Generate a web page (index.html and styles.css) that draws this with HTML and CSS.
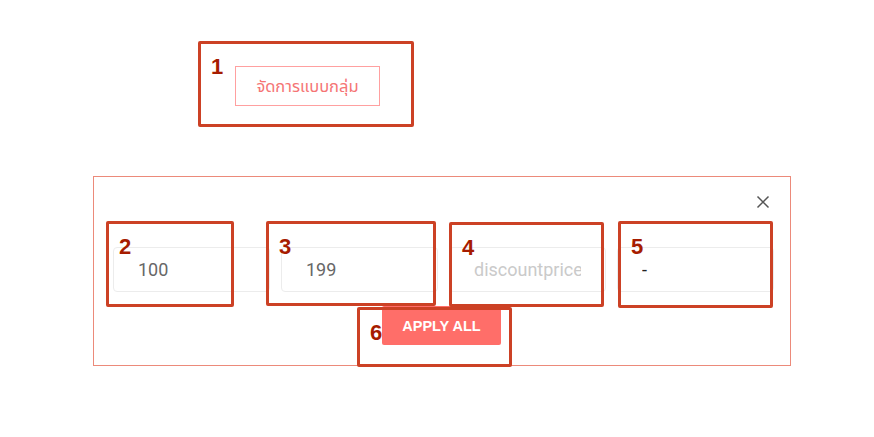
FILE: index.html
```html
<!DOCTYPE html>
<html lang="th">
<head>
    <meta charset="UTF-8">
    <meta name="viewport" content="width=device-width, initial-scale=1.0">
    <title>Bulk Edit</title>
    <link rel="stylesheet" href="styles.css">
</head>
<body>
    <div class="toolbar">
        <button class="bulk-btn" type="button">จัดการแบบกลุ่ม</button>
    </div>

    <div class="panel">
        <div class="panel-head">
            <button class="close-btn" type="button" aria-label="close">
                <svg width="14" height="14" viewBox="0 0 14 14">
                    <path d="M1.5 1.5 L12.5 12.5 M12.5 1.5 L1.5 12.5" stroke="#555" stroke-width="1.5" fill="none"/>
                </svg>
            </button>
        </div>
        <div class="fields">
            <input class="field" type="text" value="100">
            <input class="field" type="text" value="199">
            <input class="field" type="text" placeholder="discountprice">
            <input class="field field-dark" type="text" value="-">
        </div>
        <div class="panel-foot">
            <button class="apply-btn" type="button">APPLY ALL</button>
        </div>
    </div>

    <!-- annotation marks -->
    <div class="mark mark-1"><span>1</span></div>
    <div class="mark mark-2"><span>2</span></div>
    <div class="mark mark-3"><span>3</span></div>
    <div class="mark mark-4"><span>4</span></div>
    <div class="mark mark-5"><span>5</span></div>
    <div class="mark mark-6"><span>6</span></div>
</body>
</html>
```

FILE: styles.css
```css
* {
    box-sizing: border-box;
    margin: 0;
    padding: 0;
}
body {
    font-family: Roboto, 'Noto Sans', sans-serif;
    background: #fff;
    width: 874px;
    height: 437px;
    position: relative;
    overflow: hidden;
}
.toolbar {
    padding: 66px 0 0 235px;
    display: flex;
}
.bulk-btn {
    width: 145px;
    height: 40px;
    background: #fff;
    border: 1px solid #ffa0a0;
    color: #f57575;
    font-family: 'Noto Sans', 'Noto Sans Thai', sans-serif;
    font-size: 16.5px;
    cursor: pointer;
}
.panel {
    margin: 70px 0 0 93px;
    width: 698px;
    border: 1px solid #ec8a7a;
    padding: 18px 20px 20px 19px;
}
.panel-head {
    display: flex;
    justify-content: flex-end;
    height: 14px;
}
.close-btn {
    background: none;
    border: none;
    width: 14px;
    height: 14px;
    cursor: pointer;
    display: block;
}
.close-btn svg {
    display: block;
}
.fields {
    display: flex;
    gap: 11px;
    margin-top: 38px;
}
.field {
    width: 157px;
    height: 45px;
    border: 1px solid #ececec;
    border-radius: 4px;
    padding: 0 24px;
    font-family: Roboto, sans-serif;
    font-size: 18px;
    color: #676767;
    background: #fff;
    outline: none;
}
.field::placeholder {
    color: #cacaca;
}
.field-dark {
    color: #222;
}
.panel-foot {
    display: flex;
    justify-content: center;
    margin-top: 14px;
}
.apply-btn {
    width: 119px;
    height: 39px;
    background: #ff6e69;
    border: none;
    border-radius: 2px;
    color: #fff;
    font-family: 'Liberation Sans', Arial, sans-serif;
    font-weight: bold;
    font-size: 14.5px;
    cursor: pointer;
}

/* annotation marks */
.mark {
    position: absolute;
    border: 3px solid #cc4125;
    border-radius: 2px;
}
.mark span {
    position: absolute;
    left: 10px;
    top: 12px;
    font-family: 'Liberation Sans', Arial, sans-serif;
    font-weight: bold;
    font-size: 22px;
    line-height: 22px;
    color: #a61c00;
}
.mark-1 { left: 198px; top: 41px; width: 216px; height: 86px; }
.mark-2 { left: 106px; top: 221px; width: 128px; height: 86px; }
.mark-3 { left: 266px; top: 221px; width: 170px; height: 85px; }
.mark-4 { left: 449px; top: 222px; width: 155px; height: 85px; }
.mark-5 { left: 618px; top: 221px; width: 155px; height: 87px; }
.mark-6 { left: 357px; top: 307px; width: 155px; height: 60px; }
```
